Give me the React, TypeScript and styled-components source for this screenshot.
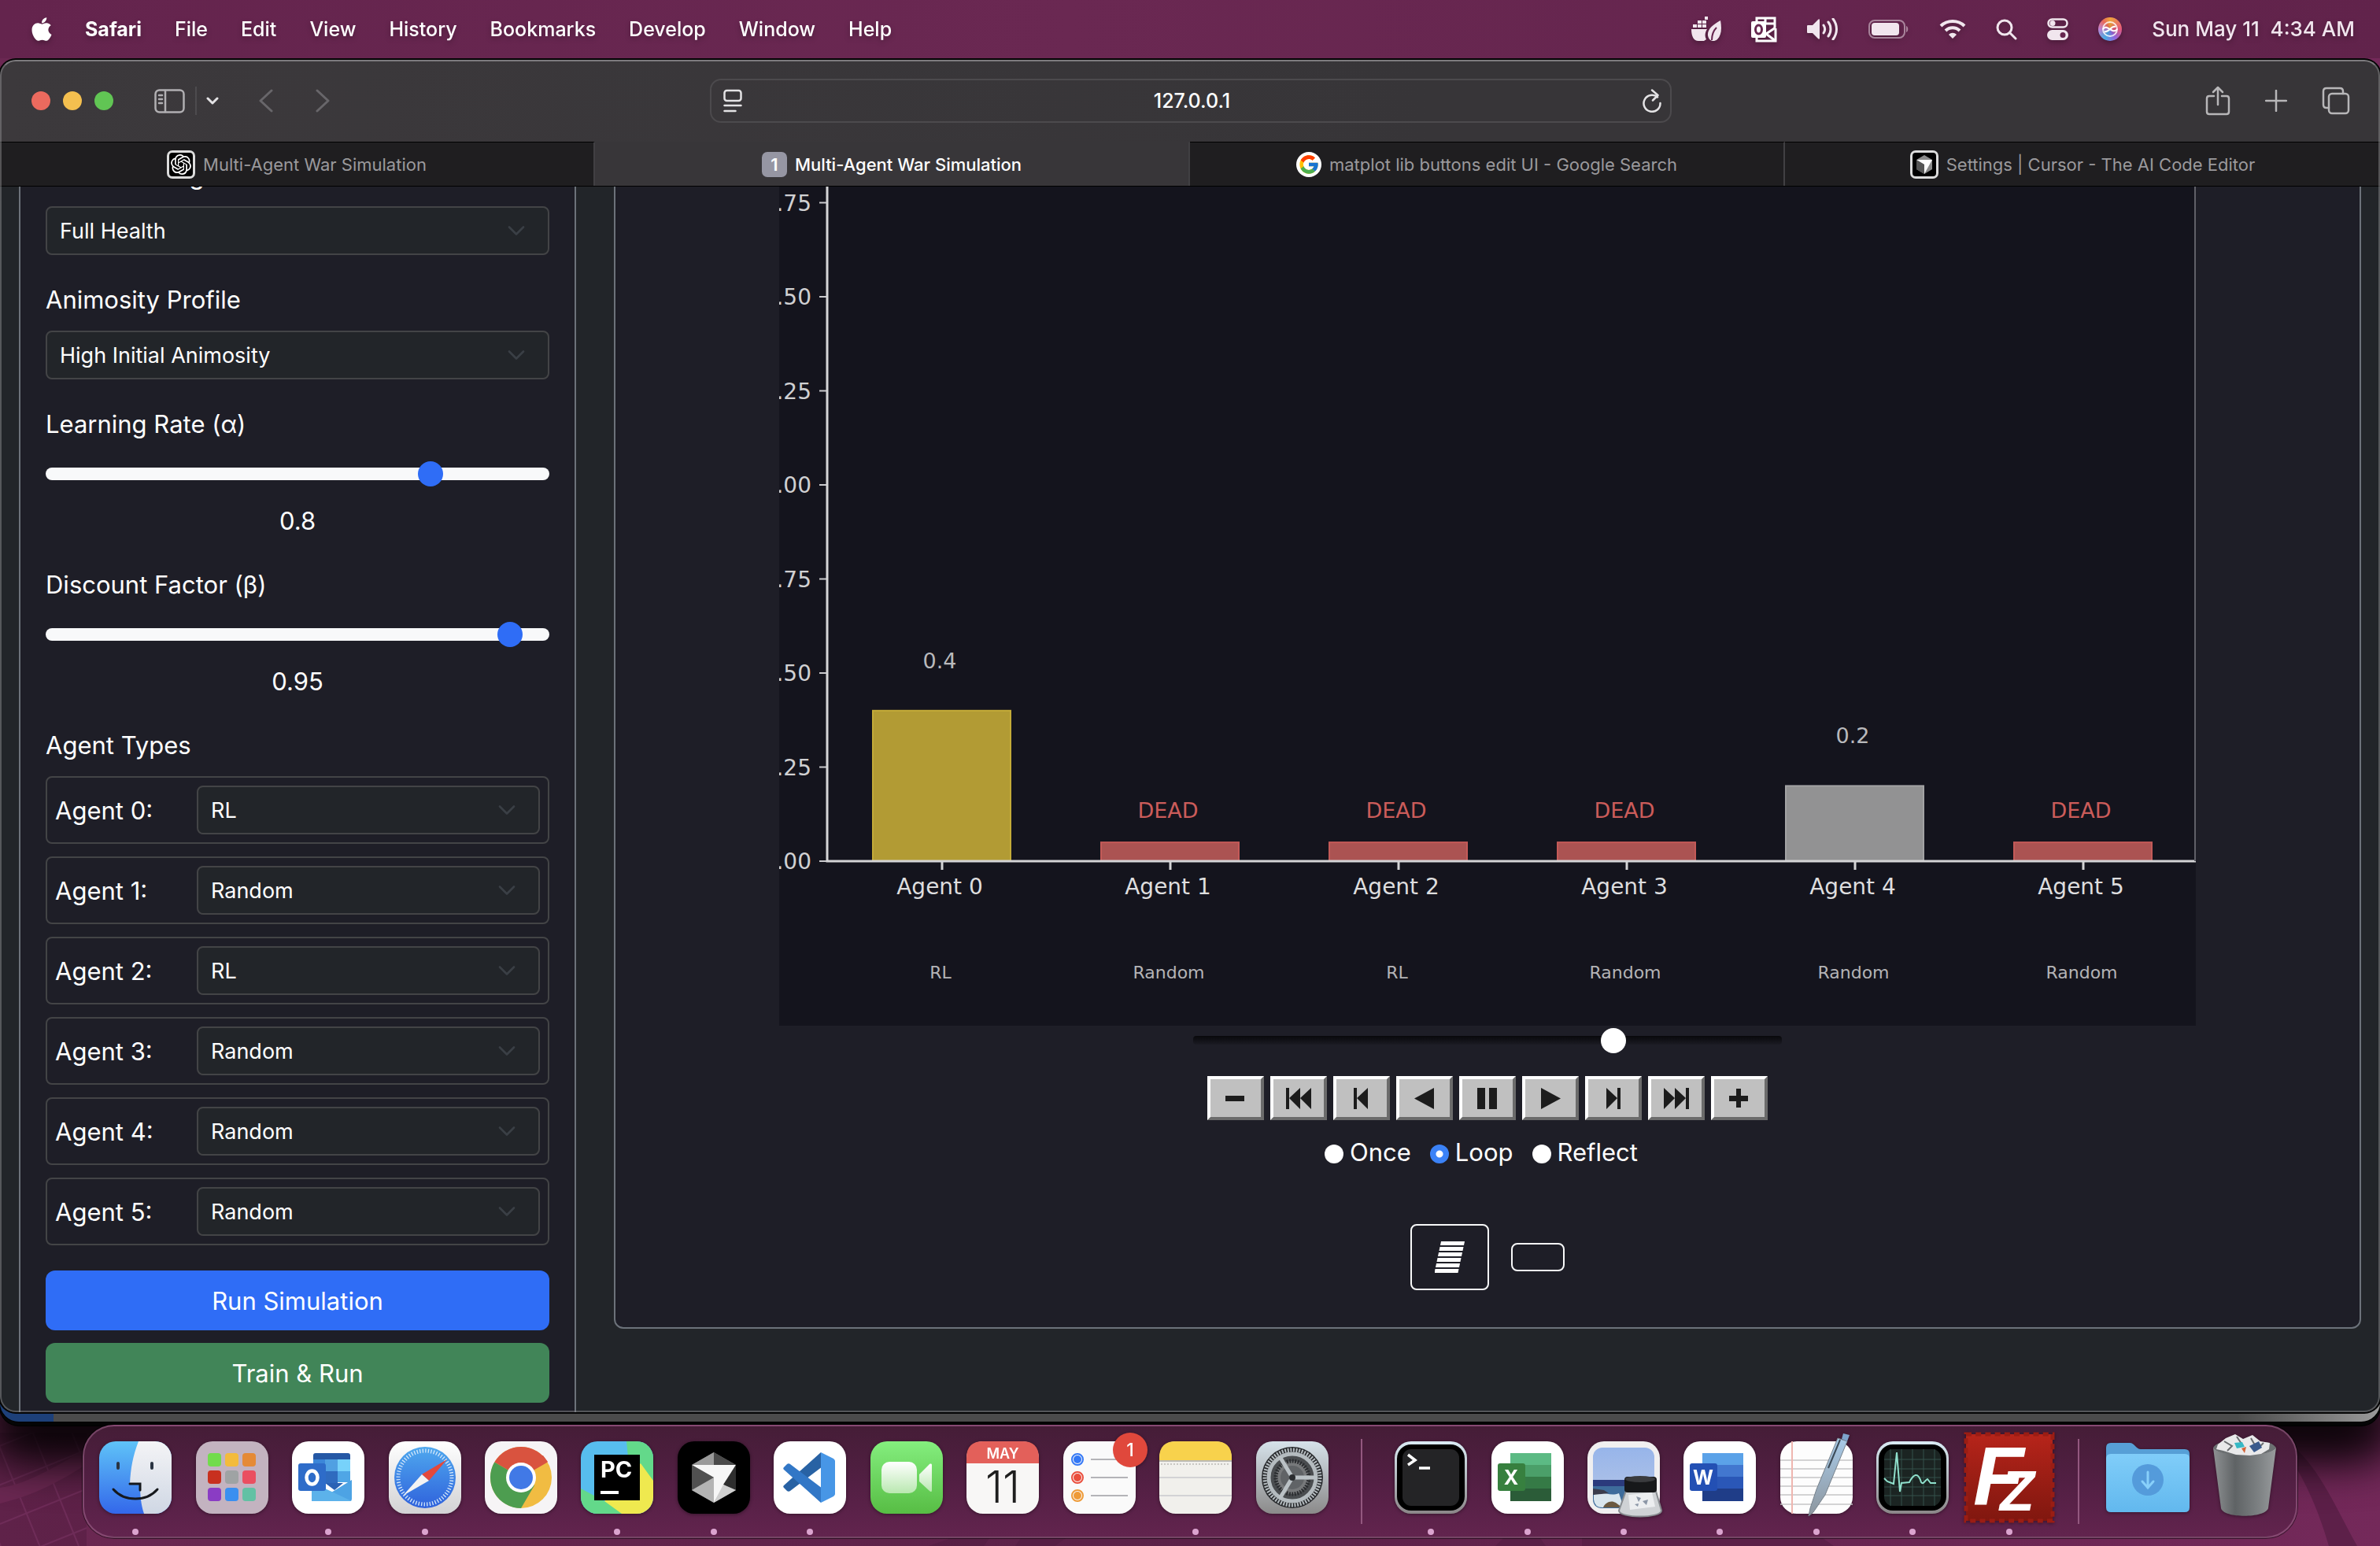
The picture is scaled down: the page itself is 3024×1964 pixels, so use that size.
import React, { useState } from "react";
import styled, { createGlobalStyle, css } from "styled-components";
import { FaApple } from "react-icons/fa";
import { FcGoogle } from "react-icons/fc";
import { SiOpenai } from "react-icons/si";

const ui = `Inter, "Liberation Sans", sans-serif`;
const plot = `"DejaVu Sans", sans-serif`;

const GlobalStyle = createGlobalStyle`
  *, *::before, *::after { box-sizing: border-box; }
  body { margin: 0; background: #5e224b; font-family: ${ui}; color: #fff; overflow: hidden; }
  button, input, select { font-family: inherit; color: inherit; margin: 0; }
  svg { display: block; }
`;

/* ---------- desktop ---------- */

const Desktop = styled.div`
  position: relative;
  isolation: isolate;
  height: 100vh;
  display: flex;
  flex-direction: column;
  overflow: hidden;
  background: linear-gradient(90deg, #6b2852, #5a2047 50%, #74295a);
`;

const Wallpaper = styled.svg`
  position: absolute;
  inset: 0;
  width: 100%;
  height: 100%;
  z-index: -1;
`;

const MenuBar = styled.header`
  flex: 0 0 74px;
  display: flex;
  align-items: center;
  justify-content: space-between;
  padding: 0 32px 0 40px;
  background: linear-gradient(90deg, #64244d, #6a2852 45%, #61234b);
  svg, span, button { filter: drop-shadow(0 3px 3px rgba(0, 0, 0, 0.25)); }
`;

const MenuGroup = styled.nav`
  display: flex;
  align-items: center;
  gap: 42px;
`;

const AppleLogo = styled(FaApple)`
  width: 26px;
  height: 34px;
`;

const MenuItem = styled.button<{ $bold?: boolean }>`
  border: 0;
  padding: 0;
  background: none;
  font-size: 25px;
  line-height: 32px;
  font-weight: ${(p) => (p.$bold ? 700 : 500)};
`;

const StatusGroup = styled.div`
  display: flex;
  align-items: center;
  gap: 38px;
  color: #f1e6ee;
`;

const Clock = styled.span`
  font-size: 26px;
  line-height: 32px;
  font-weight: 500;
  white-space: pre;
`;

const SiriOrb = styled.span`
  display: grid;
  place-items: center;
  width: 30px;
  height: 30px;
  border-radius: 50%;
  background: conic-gradient(#f0a53c, #ea5a7e 90deg, #9a6bea 150deg, #4fb4f0 210deg, #c486d8 270deg, #ea6a5a 320deg, #f0a53c);
`;

/* ---------- browser window ---------- */

const BrowserWindow = styled.main`
  position: relative;
  z-index: 3;
  flex: 1 1 0;
  min-height: 0;
  margin-top: 2px;
  display: flex;
  flex-direction: column;
  overflow: hidden;
  border-radius: 20px;
  background: #222529;
  box-shadow: 0 0 0 2px #050505;
  &::after {
    content: "";
    position: absolute;
    inset: 0;
    border: 2px solid rgba(150, 150, 152, 0.45);
    border-top-color: #7d7b7e;
    border-radius: 20px;
    pointer-events: none;
  }
`;

const BackWindow = styled.div<{ $depth: number; $fill: string }>`
  position: relative;
  z-index: ${(p) => 3 - p.$depth};
  flex: 0 0 60px;
  margin-top: ${(p) => (p.$depth === 1 ? -48 : -55)}px;
  border-radius: 0 0 24px 24px;
  background: ${(p) => p.$fill};
  box-shadow: 0 0 0 1px #000, 0 30px 60px 10px rgba(0, 0, 0, 0.75);
`;

const Toolbar = styled.div`
  flex: 0 0 104px;
  display: grid;
  grid-template-columns: 1fr minmax(0, 1222px) 1fr;
  align-items: center;
  padding: 0 38px 0 40px;
  background: linear-gradient(90deg, #3c393c, #373538 60%);
`;

const ToolSide = styled.div<{ $end?: boolean }>`
  display: flex;
  align-items: center;
  justify-content: ${(p) => (p.$end ? "flex-end" : "flex-start")};
  gap: ${(p) => (p.$end ? 44 : 0)}px;
`;

const Lights = styled.div`
  display: flex;
  gap: 16px;
  margin-right: 52px;
`;

const Light = styled.button<{ $color: string }>`
  width: 24px;
  height: 24px;
  padding: 0;
  border: 0;
  border-radius: 50%;
  background: ${(p) => p.$color};
`;

const ToolButton = styled.button<{ $tone?: string; $after?: number }>`
  display: grid;
  place-items: center;
  padding: 0;
  border: 0;
  background: none;
  color: ${(p) => p.$tone ?? "#b7b6b8"};
  margin-right: ${(p) => p.$after ?? 0}px;
`;

const ToolRule = styled.i`
  width: 2px;
  height: 36px;
  background: #4d4b4e;
  margin-right: 12px;
`;

const Address = styled.label`
  display: flex;
  align-items: center;
  height: 56px;
  padding: 0 10px 0 15px;
  border: 2px solid #4c4a4d;
  border-radius: 14px;
`;

const AddressInput = styled.input`
  flex: 1;
  min-width: 0;
  border: 0;
  background: none;
  text-align: center;
  font-size: 25px;
  font-weight: 500;
  line-height: 32px;
  outline: none;
`;

const TabBar = styled.div`
  flex: 0 0 57px;
  display: grid;
  grid-template-columns: repeat(4, 1fr);
  border-bottom: 1px solid #000;
`;

const Tab = styled.button<{ $active?: boolean }>`
  display: flex;
  align-items: center;
  justify-content: center;
  gap: 10px;
  padding: 0;
  border: 0;
  border-top: 1px solid #000;
  border-right: 2px solid #414043;
  background: #1f1e20;
  color: #9a999c;
  font-size: 22px;
  line-height: 30px;
  ${(p) =>
    p.$active &&
    css`
      border-top-color: #383639;
      background: #383639;
      color: #fff;
      font-weight: 500;
    `}
  &:last-child { border-right: 0; }
`;

const Favicon = styled.span<{ $kind: "dark" | "round" | "pin" }>`
  display: grid;
  place-items: center;
  width: ${(p) => (p.$kind === "dark" ? 36 : 32)}px;
  height: ${(p) => (p.$kind === "dark" ? 36 : 32)}px;
  border-radius: ${(p) => (p.$kind === "round" ? "50%" : "7px")};
  background: ${(p) => (p.$kind === "dark" ? "#000" : p.$kind === "round" ? "#fff" : "#9696a3")};
  border: ${(p) => (p.$kind === "dark" ? "3px solid #dcdcdc" : "0")};
  color: #fff;
  font-size: 22px;
  font-weight: 600;
`;

/* ---------- page ---------- */

const Viewport = styled.div`
  flex: 1;
  min-height: 0;
  overflow: hidden;
`;

/* The page is shown scrolled down, so its first rows lie above the viewport. */
const Page = styled.div`
  margin-top: -97px;
  display: grid;
  grid-template-columns: 1fr 3fr;
  align-items: start;
`;

const Column = styled.div`
  min-width: 0;
  padding: 24px;
`;

const Card = styled.section`
  border: 2px solid #6c727a;
  border-radius: 12px;
  background: #1e1e27;
`;

const Sidebar = styled(Card)`
  display: flex;
  flex-direction: column;
  gap: 32px;
  padding: 32px;
`;

const Field = styled.div`
  display: flex;
  flex-direction: column;
`;

const FieldLabel = styled.label`
  padding-top: 1px;
  margin-bottom: 15px;
  font-size: 31px;
  line-height: 48px;
`;

const RangeValue = styled.output`
  padding-top: 12px;
  text-align: center;
  font-size: 31px;
  line-height: 48px;
`;

const SelectBox = styled.div`
  flex: 1;
  min-width: 0;
  display: grid;
  align-items: center;
  & > * { grid-area: 1 / 1; }
  svg { justify-self: end; margin-right: 30px; pointer-events: none; }
`;

const SelectInput = styled.select`
  appearance: none;
  width: 100%;
  height: 62px;
  padding: 2px 16px 0;
  border: 2px solid #434446;
  border-radius: 8px;
  background: #222529;
  font-size: 27px;
  line-height: 42px;
`;

const RateRange = styled.input`
  appearance: none;
  width: 100%;
  height: 48px;
  background: none;
  &::-webkit-slider-runnable-track {
    height: 16px;
    border-radius: 8px;
    background: #f8f9fa;
  }
  &::-webkit-slider-thumb {
    appearance: none;
    width: 32px;
    height: 32px;
    margin-top: -8px;
    border-radius: 50%;
    background: #2f6df6;
  }
`;

const AgentList = styled.div`
  display: flex;
  flex-direction: column;
  gap: 16px;
`;

const AgentRow = styled.div`
  display: flex;
  align-items: center;
  padding: 10px;
  border: 2px solid #434446;
  border-radius: 8px;
`;

const AgentName = styled.label`
  flex: 0 0 180px;
  padding-top: 2px;
  font-size: 31px;
  line-height: 48px;
`;

const Actions = styled.div`
  display: flex;
  flex-direction: column;
  gap: 16px;
`;

const ActionButton = styled.button<{ $color: string }>`
  height: 76px;
  padding: 1px 0 0;
  border: 0;
  border-radius: 12px;
  background: ${(p) => p.$color};
  font-size: 31px;
  line-height: 48px;
`;

const Stage = styled(Card)`
  display: flex;
  flex-direction: column;
  align-items: center;
  padding: 24px 24px 47px;
`;

const Chart = styled.svg`
  width: 100%;
  max-width: 1800px;
  height: auto;
  background: #14141d;
  font-family: ${plot};
`;

const FrameRange = styled.input`
  appearance: none;
  width: 748px;
  max-width: 100%;
  height: 32px;
  margin: 2px 0 30px;
  background: none;
  &::-webkit-slider-runnable-track {
    height: 11px;
    border-radius: 4px;
    background: linear-gradient(#08080b, #1b1b23);
  }
  &::-webkit-slider-thumb {
    appearance: none;
    width: 32px;
    height: 32px;
    margin-top: -10px;
    border-radius: 50%;
    background: #fff;
  }
`;

const PlayerButtons = styled.div`
  display: flex;
  gap: 8px;
`;

const PlayerButton = styled.button`
  display: grid;
  place-items: center;
  width: 72px;
  height: 56px;
  padding: 0;
  border: 4px solid;
  border-color: #fff #6b6b6b #6b6b6b #fff;
  background: #c0c0c0;
  color: #1c1c1c;
`;

const LoopModes = styled.div`
  display: flex;
  gap: 24px;
  margin: 17px 0 67px;
  padding-right: 16px;
`;

const LoopMode = styled.label`
  display: flex;
  align-items: center;
  gap: 8px;
  font-size: 31px;
  line-height: 48px;
`;

const Radio = styled.input`
  appearance: none;
  width: 24px;
  height: 24px;
  margin-top: 4px;
  border-radius: 50%;
  background: radial-gradient(#fff 60%, #e2e2e2);
  &:checked { background: radial-gradient(#fff 0 4px, #3b82f7 5px); }
`;

const Toggles = styled.div`
  display: flex;
  align-items: center;
  gap: 28px;
`;

const Toggle = styled.button<{ $small?: boolean }>`
  display: grid;
  place-items: center;
  width: ${(p) => (p.$small ? 68 : 100)}px;
  height: ${(p) => (p.$small ? 36 : 84)}px;
  padding: 0;
  border: 2px solid #f8f9fa;
  border-radius: 8px;
  background: none;
`;

/* ---------- dock ---------- */

const Dock = styled.footer`
  position: relative;
  z-index: 4;
  flex: 0 0 144px;
  margin: -1px 105px 10px;
  display: flex;
  padding: 0 4px;
  border: 2px solid rgba(190, 130, 170, 0.4);
  border-radius: 40px;
  background: linear-gradient(#451d37, #521f43 50%, #62244e);
  box-shadow: 0 0 0 1px rgba(0, 0, 0, 0.5);
`;

const DockCell = styled.button`
  flex: 1 1 0;
  min-width: 0;
  display: flex;
  flex-direction: column;
  align-items: center;
  padding: 19px 0 0;
  border: 0;
  background: none;
`;

const DockIcon = styled.svg`
  width: 92px;
  height: 92px;
  overflow: visible;
  filter: drop-shadow(0 1px 2px rgba(0, 0, 0, 0.4));
`;

const RunningDot = styled.i`
  width: 8px;
  height: 8px;
  margin-top: 19px;
  border-radius: 50%;
  background: #dba4cf;
`;

const DockRule = styled.i`
  flex: 0 0 54px;
  display: grid;
  place-items: center;
  &::after { content: ""; width: 2px; height: 108px; background: #93587f; }
`;

/* ---------- small drawings ---------- */

const Chevron = () => (
  <svg width="24" height="24" viewBox="0 0 16 16" fill="none" stroke="#3a3f45" strokeWidth="1.8" strokeLinecap="round" strokeLinejoin="round">
    <path d="m2 5 6 6 6-6" />
  </svg>
);

const line = { fill: "none", stroke: "currentColor", strokeLinecap: "round", strokeLinejoin: "round" } as const;

const DockerIcon = () => (
  <svg width="38" height="32" viewBox="0 0 38 32" fill="currentColor">
    <path d="M0 16h20c-3 5-3 9-1 13l-3 2H9C3 31 0 25 0 16z" />
    <path d="M2 10h5v4H2zM8 10h5v4H8zM14 10h5v4h-5zM8 5h5v4H8zM14 5h5v4h-5zM17 0h4v4h-4z" />
    <path d="M37 5c2 11 1 19-4 24-5 4-11 2-12-5-1-8 7-14 16-19z" />
    <path d="M26 30c0-8 2-12 6-16" fill="none" stroke="#66264f" strokeWidth="2" />
  </svg>
);

const OutlookIcon = () => (
  <svg width="33" height="33" viewBox="0 0 33 33" fill="none" stroke="#fff" strokeWidth="3">
    <path d="M7 6V2h23v12M7 26v5h24V15M18 2v8M18 9h12" />
    <path d="m19 22 12-8M19 22l12 9" />
    <rect x="0" y="6" width="19" height="21" rx="2" fill="#fff" stroke="none" />
    <ellipse cx="9.500" cy="16.500" rx="4" ry="5.500" stroke="#66264f" />
  </svg>
);

const VolumeIcon = () => (
  <svg width="40" height="28" viewBox="0 0 40 28">
    <path d="M1 9h6l7-7c1-1 2-1 2 1v22c0 2-1 2-2 1l-7-7H1c-1 0-1-1-1-1v-8s0-1 1-1z" fill="currentColor" />
    <path d="M21 9c2 3 2 7 0 10M27 5c4 5 4 13 0 18M33 1c6 8 6 18 0 26" {...line} strokeWidth="3" />
  </svg>
);

const BatteryIcon = () => (
  <svg width="52" height="24" viewBox="0 0 52 24">
    <rect x="1" y="1" width="45" height="22" rx="7" fill="none" stroke="currentColor" strokeOpacity="0.5" strokeWidth="2" />
    <rect x="4" y="4" width="35" height="16" rx="4" fill="currentColor" />
    <path d="M48 8c3 1 3 7 0 8z" fill="currentColor" fillOpacity="0.5" />
  </svg>
);

const WifiIcon = () => (
  <svg width="34" height="26" viewBox="0 0 34 26">
    <path d="M2 9C10 1 24 1 32 9M8 15c5-5 13-5 18 0" {...line} strokeWidth="4" strokeLinecap="butt" />
    <path d="M17 25l-5-5c3-3 7-3 10 0z" fill="currentColor" />
  </svg>
);

const SearchIcon = () => (
  <svg width="27" height="27" viewBox="0 0 27 27" {...line} strokeWidth="3">
    <circle cx="11" cy="11" r="9" />
    <path d="m18 18 7 7" />
  </svg>
);

const ControlIcon = () => (
  <svg width="27" height="28" viewBox="0 0 27 28">
    <rect x="1.500" y="1.500" width="24" height="10" rx="5" {...line} strokeWidth="2.500" />
    <circle cx="7" cy="6.500" r="3.500" fill="currentColor" />
    <rect x="0" y="15" width="27" height="13" rx="6.500" fill="currentColor" />
    <circle cx="20" cy="21.500" r="3.500" fill="#66264f" />
  </svg>
);

const SidebarIcon = () => (
  <svg width="39" height="31" viewBox="0 0 39 31" {...line} strokeWidth="2.500">
    <rect x="1.500" y="1.500" width="36" height="28" rx="5" />
    <path d="M14 2v27M6 8h4M6 13h4M6 18h4" />
  </svg>
);

const CursorMark = () => (
  <svg width="22" height="24" viewBox="0 0 22 24">
    <path d="M11 0 21 6v12l-10 6L1 18V6z" fill="#8a8a8a" />
    <path d="M1 6h20L11 24V12z" fill="#fff" />
    <path d="M1 6l10 6v12L1 18z" fill="#555" />
  </svg>
);

/* ---------- player ---------- */

const players: { label: string; d: string }[] = [
  { label: "Slower", d: "M2 12h24v7H2z" },
  { label: "First frame", d: "M-1 2h4v27h-4zM3 15 17 2v27zM17 15 31 2v27z" },
  { label: "Previous frame", d: "M5 2h4v27H5zM9 15 23 2v27z" },
  { label: "Play backward", d: "M2 15.500 27 2v27z" },
  { label: "Pause", d: "M2 2h10v27H2zM17 2h10v27H17z" },
  { label: "Play", d: "M3 2v27l25-13.500z" },
  { label: "Next frame", d: "M6 2v27l14-14zM20 2h4v27h-4z" },
  { label: "Last frame", d: "M-1 2v27l14-14zM13 2v27l14-14zM27 2h4v27h-4z" },
  { label: "Faster", d: "M2 12h9V3h6v9h9v7h-9v8h-6v-8H2z" },
];

/* ---------- plot ---------- */

const baseline = 904;
const unit = 478;
const agents = [
  { name: "Agent 0", type: "RL", value: 0.4, note: "0.4", fill: "#b29b34", edge: "#c4ab38" },
  { name: "Agent 1", type: "Random", value: 0.05, note: "DEAD", fill: "#ab5352", edge: "#c45a58" },
  { name: "Agent 2", type: "RL", value: 0.05, note: "DEAD", fill: "#ab5352", edge: "#c45a58" },
  { name: "Agent 3", type: "Random", value: 0.05, note: "DEAD", fill: "#ab5352", edge: "#c45a58" },
  { name: "Agent 4", type: "Random", value: 0.2, note: "0.2", fill: "#929293", edge: "#a3a3a4" },
  { name: "Agent 5", type: "Random", value: 0.05, note: "DEAD", fill: "#ab5352", edge: "#c45a58" },
];

const HealthPlot = () => (
  <Chart viewBox="0 0 1800 1113" role="img" aria-label="Agent health">
    {agents.map((a, i) => {
      const x = 206 + i * 290;
      const h = a.value * unit;
      const dead = a.note === "DEAD";
      return (
        <g key={a.name} textAnchor="middle">
          <rect x={x - 87} y={baseline - h} width="175" height={h} fill={a.fill} stroke={a.edge} strokeWidth="2" />
          <text x={x - 2} y={baseline - h - (dead ? 31 : 54)} fontSize="27" fill={dead ? "#cb5c5a" : "#b9b9bc"}>{a.note}</text>
          <path d={`M${x + 1} ${baseline}v11`} stroke="#d4d4d6" strokeWidth="3" />
          <text x={x - 2} y="946" fontSize="28" fill="#dededf">{a.name}</text>
          <text x={x - 1} y="1053" fontSize="22" fill="#b3b3b6">{a.type}</text>
        </g>
      );
    })}
    {[0, 1, 2, 3, 4, 5, 6, 7].map((n) => {
      const y = baseline - n * 0.25 * unit;
      return (
        <g key={n}>
          <path d={`M51 ${y}h11`} stroke="#c9c9cc" strokeWidth="2" />
          <text x="41" y={y + 10} textAnchor="end" fontSize="28" fill="#d0d0d2">{(n * 0.25).toFixed(2)}</text>
        </g>
      );
    })}
    <path d={`M61 0V${baseline}H1800`} fill="none" stroke="#d4d4d6" strokeWidth="3" />
    <path d={`M1799 0V${baseline}`} stroke="#606068" strokeWidth="2" />
  </Chart>
);

/* ---------- dock icons ---------- */

const Tile = ({ fill = "#fff" }: { fill?: string }) => <rect width="92" height="92" rx="21" fill={fill} />;

const Gradient = ({ id, from, to }: { id: string; from: string; to: string }) => (
  <linearGradient id={id} x1="0" y1="0" x2="0" y2="1">
    <stop offset="0" stopColor={from} />
    <stop offset="1" stopColor={to} />
  </linearGradient>
);

const Letter = ({ x, y, size, fill = "#fff", weight = 700, children }: { x: number; y: number; size: number; fill?: string; weight?: number; children: string }) => (
  <text x={x} y={y} fontSize={size} fill={fill} fontWeight={weight} textAnchor="middle" fontFamily={ui}>{children}</text>
);

const finder = (
  <>
    <Gradient id="fi" from="#5fc3f8" to="#3367ea" />
    <Gradient id="fw" from="#f4f4f6" to="#cfd7e4" />
    <clipPath id="ft"><rect width="92" height="92" rx="21" /></clipPath>
    <g clipPath="url(#ft)">
      <rect width="92" height="92" fill="url(#fi)" />
      <path d="M50 0c-7 18-10 34-11 54h13c0 14 1 26 5 38h40V0z" fill="url(#fw)" />
    </g>
    <path d="M24 28v6M67 28v6" stroke="#2a3442" strokeWidth="4" strokeLinecap="round" />
    <path d="M39 54h13v8M18 61c14 16 42 16 56 0" fill="none" stroke="#15181c" strokeWidth="3" strokeLinecap="round" />
  </>
);

const padColors = ["#72dc4c", "#f3bb3c", "#e58a36", "#c8301f", "#9fa3a4", "#ea4f60", "#8a3cc4", "#3a8ff0", "#62c1a4"];
const launchpad = (
  <>
    <Tile fill="#c3b3c0" />
    {padColors.map((c, i) => (
      <rect key={c} x={15 + (i % 3) * 22} y={15 + Math.floor(i / 3) * 22} width="17" height="17" rx="4" fill={c} />
    ))}
  </>
);

const outlook = (
  <>
    <Tile />
    <path d="M27 18q0-3 3-3h41q3 0 3 3v30H27z" fill="#2558a5" />
    <path d="M27 23h15v15H27z" fill="#3b86d8" />
    <path d="M42 23h16v15H42z" fill="#50a0e2" />
    <path d="M58 23h16v15H58z" fill="#77d2fa" />
    <path d="M27 38h31v16H27z" fill="#2f6bbf" />
    <path d="M58 38h16v14H58z" fill="#4fa6e6" />
    <path d="M25 50l25 15 26-16v24q0 3-3 3H28q-3 0-3-3z" fill="#4da3e4" />
    <path d="M42 53h23L54 62z" fill="#2a62b4" />
    <path d="M25 76V52l51 24z" fill="#5cb2ea" />
    <rect x="8" y="28" width="35" height="35" rx="3" fill="#2e6cc9" />
    <ellipse cx="25.500" cy="46" rx="7" ry="8.500" fill="none" stroke="#fff" strokeWidth="4.500" />
  </>
);

const safari = (
  <>
    <Gradient id="st" from="#ffffff" to="#d2d2d4" />
    <Gradient id="sb" from="#4fa8ee" to="#2f62dc" />
    <Tile fill="url(#st)" />
    <circle cx="46" cy="46" r="39" fill="url(#sb)" />
    <circle cx="46" cy="46" r="34" fill="none" stroke="#d5e8fa" strokeWidth="5" strokeDasharray="1.300 2.260" />
    <path d="M74 23 51 50l-9-8z" fill="#e3483b" />
    <path d="M18 69 42 42l9 8z" fill="#f3f3f3" />
  </>
);

const chrome = (
  <>
    <Tile fill="#f6f4f6" />
    <circle cx="46" cy="46" r="39" fill="#f1bc42" />
    <path d="M46 46 12.200 26.500A39 39 0 0 1 79.800 26.500z" fill="#d9533f" />
    <path d="M12.200 26.500A39 39 0 0 0 46 85l17-29-17-10z" fill="#4d9d50" />
    <path d="M46 26h34l-6-8H30z" fill="#d9533f" />
    <circle cx="46" cy="46" r="19" fill="#fff" />
    <circle cx="46" cy="46" r="15" fill="#4179e6" />
  </>
);

const pycharm = (
  <>
    <clipPath id="pt"><rect width="92" height="92" rx="21" /></clipPath>
    <g clipPath="url(#pt)">
      <rect width="92" height="92" fill="#57bdee" />
      <path d="M58 0h34v60L60 20z" fill="#63d98a" />
      <path d="M0 60l60 32H0z" fill="#63d98a" />
      <path d="M76 28 92 50v42H52L30 76z" fill="#efe94f" />
    </g>
    <rect x="17" y="17" width="58" height="58" fill="#000" />
    <Letter x={45} y={46} size={29}>PC</Letter>
    <path d="M25 65h23" stroke="#fff" strokeWidth="4" />
  </>
);

const cursor = (
  <>
    <Tile fill="#000" />
    <path d="M46 14 74 30v32L46 78 18 62V30z" fill="#777" />
    <path d="M46 14 74 30H18z" fill="#4a4a4a" />
    <path d="M46 14v16H18z" fill="#9a9a9a" />
    <path d="M18 30h56L46 78V46z" fill="#f6f6f6" />
    <path d="M18 30l28 16-28 16z" fill="#505050" />
    <path d="M18 62l28-16v32z" fill="#b4b4b4" />
    <path d="M74 30v32L58 55z" fill="#2e2e2e" />
    <path d="M58 55l16 7-28 16z" fill="#d0d0d0" />
  </>
);

const vscode = (
  <>
    <Tile />
    <path d="M60 14 13 56c-1 1-1 2 0 3l4 4c1 1 3 1 4 0L62 32z" fill="#2862a4" />
    <path d="M60 78 13 36c-1-1-1-2 0-3l4-4c1-1 3-1 4 0L62 60z" fill="#3277c6" />
    <path d="M60 14l16 8c1 1 2 2 2 3v42c0 1-1 2-2 3l-16 8z" fill="#4796e6" />
  </>
);

const facetime = (
  <>
    <Gradient id="fg" from="#84ee7e" to="#57bd44" />
    <Gradient id="fc" from="#ffffff" to="#b9e8b0" />
    <Tile fill="url(#fg)" />
    <rect x="14" y="26" width="45" height="40" rx="10" fill="url(#fc)" />
    <path d="M62 42 75 29c2-1 3 0 3 1v32c0 2-1 3-3 1L62 51z" fill="url(#fc)" />
  </>
);

const calendar = (
  <>
    <Tile fill="#f8f7f6" />
    <path d="M0 28V21Q0 0 21 0h50q21 0 21 21v7z" fill="#e3605a" />
    <Letter x={46} y={22} size={18} weight={600}>MAY</Letter>
    <Letter x={46} y={78} size={56} weight={300} fill="#1e1e1e">11</Letter>
  </>
);

const reminders = (
  <>
    <Tile fill="#fafafa" />
    {["#3478f6", "#ea4e3d", "#ee9a37"].map((c, i) => (
      <g key={c}>
        <circle cx="18" cy={23 + i * 23} r="7" fill="none" stroke={c} strokeWidth="2" />
        <circle cx="18" cy={23 + i * 23} r="5" fill={c} />
        <path d={`M35 ${23 + i * 23}h47`} stroke="#b4b4b8" strokeWidth="2" />
      </g>
    ))}
    <circle cx="85" cy="11" r="22" fill="#e0483c" />
    <Letter x={85} y={19} size={23} weight={500}>1</Letter>
  </>
);

const notes = (
  <>
    <Tile fill="#f1f0ec" />
    <path d="M0 24v-3Q0 0 21 0h50q21 0 21 21v3z" fill="#f8d24c" />
    <path d="M0 25h92" stroke="#bcbab4" strokeWidth="2" />
    <path d="M2 29h88" stroke="#c9c7c2" strokeWidth="2" strokeDasharray="2 2" />
    <path d="M0 46h92M0 69h92" stroke="#d3d3d5" strokeWidth="2" />
  </>
);

const settings = (
  <>
    <Gradient id="sg" from="#d6e2ea" to="#8b8a8a" />
    <Tile fill="url(#sg)" />
    <circle cx="46" cy="46" r="39" fill="#26282b" />
    <circle cx="46" cy="46" r="35" fill="none" stroke="#b4bbbf" strokeWidth="5" strokeDasharray="2 1.600" />
    <circle cx="46" cy="46" r="30" fill="#4a4d50" stroke="#b4bbbf" strokeWidth="5" />
    <circle cx="46" cy="46" r="21" fill="#77797b" stroke="#2b2d30" strokeWidth="5" strokeDasharray="2 1.500" />
    <circle cx="46" cy="46" r="15" fill="#606366" />
    <path d="M46 46h29M46 46 31 21M46 46 31 71" stroke="#bac1c5" strokeWidth="5" strokeLinecap="round" />
    <circle cx="46" cy="46" r="4" fill="#2b2d30" />
  </>
);

const terminal = (
  <>
    <Gradient id="tg" from="#d9ebf4" to="#8b8688" />
    <Tile fill="url(#tg)" />
    <rect x="3" y="4" width="86" height="84" rx="18" fill="#000" />
    <rect x="10" y="10" width="72" height="72" rx="11" fill="#242426" />
    <path d="m17 17 9 7-9 6" fill="none" stroke="#fff" strokeWidth="3.500" />
    <path d="M31 34h14" stroke="#fff" strokeWidth="3.500" />
  </>
);

const office = (rows: string[], badge: string, letter: string) => (
  <>
    <Tile />
    {rows.map((c, i) => (
      <rect key={c} x="24" y={15 + i * 15} width="52" height="16" fill={c} />
    ))}
    <rect x="8" y="28" width="35" height="35" rx="3" fill={badge} />
    <Letter x={25} y={55} size={25}>{letter}</Letter>
  </>
);

const preview = (
  <>
    <Gradient id="pv" from="#97b5ea" to="#b7c6e6" />
    <Tile fill="#f0eff0" />
    <rect x="7" y="8" width="78" height="77" rx="12" fill="url(#pv)" />
    <path d="M7 49h78v24q0 12-12 12H19Q7 85 7 73z" fill="#3e6c9b" />
    <path d="M7 49h78v8H7z" fill="#2b3a7c" />
    <path d="M8 68c12-6 20 3 32-2l6 18H19Q9 84 8 74z" fill="#d9e6ee" />
    <path d="M20 84c2-6 10-10 16-6l8 6z" fill="#6b5a41" />
    <path d="M7 60l14 2 6 4-20 2z" fill="#3a3c4c" />
    <path d="M50 60h36l8 28c0 10-54 10-54 0z" fill="#cfd2d5" stroke="#888c90" strokeWidth="2" />
    <path d="M52 68l30-3 4 18-32 4z" fill="#eceef0" />
    <path d="M62 70l6 2-3 5zM70 76l7-2-2 7zM60 80l5-1-1 4z" fill="#8b96a6" />
    <rect x="47" y="45" width="41" height="20" rx="4" fill="#17181a" />
    <ellipse cx="67" cy="48" rx="19" ry="4" fill="#3a3b3e" />
  </>
);

const textedit = (
  <>
    <Gradient id="tp" from="#a8cae8" to="#8d969e" />
    <Tile fill="#fdfdfd" />
    {[24, 35, 46, 57, 68, 80].map((y) => (
      <path key={y} d={`M0 ${y}h92`} stroke="#c4c4c6" strokeWidth="1.500" />
    ))}
    <path d="M15 0v92" stroke="#efb6b0" strokeWidth="2" />
    <path d="M73 -4l12 4L57 68 42 90l-6 5 2-10 8-24z" fill="url(#tp)" stroke="#77828c" strokeWidth="1" />
    <path d="M80 -10l8 2-3 8-7-3z" fill="#7ea3cc" />
    <path d="M76 -2 61 34" stroke="#3c4a57" strokeWidth="2" />
  </>
);

const activity = (
  <>
    <Tile fill="url(#tg)" />
    <rect x="3" y="4" width="86" height="84" rx="18" fill="#000" />
    <rect x="10" y="10" width="72" height="72" rx="11" fill="#1b2422" />
    <path d="M10 23h72M10 35h72M10 46h72M10 58h72M10 69h72M18 10v72M32 10v72M46 10v72M60 10v72M74 10v72" stroke="#35504a" strokeWidth="1" />
    <path d="M10 47l4 4 8 3 4-40 4 50 2-11 10-1c5-10 11-14 15 0 3 4 6-4 8-4l4 5h7" fill="none" stroke="#8fe0cc" strokeWidth="2" />
  </>
);

const filezilla = (
  <>
    <Gradient id="fz" from="#b6241a" to="#80170f" />
    <rect x="-9" y="-9" width="110" height="110" fill="url(#fz)" />
    <rect x="-9" y="-9" width="110" height="110" fill="none" stroke="#9a1d14" strokeWidth="5" strokeDasharray="7 5.222" />
    <g fontFamily={`"Liberation Sans", sans-serif`} fontWeight="700" fontStyle="italic" fill="#fff">
      <text x="0" y="81" fontSize="106">F</text>
      <text x="34" y="88" fontSize="72">Z</text>
    </g>
  </>
);

const downloads = (
  <>
    <Gradient id="dl" from="#80cdf9" to="#62b8ee" />
    <path d="M-7 8q0-6 6-6h24c6 0 8 8 14 8h56q6 0 6 6v30H-7z" fill="#579fd6" />
    <path d="M-7 22q0-6 6-6h94q6 0 6 6v62q0 6-6 6H-1q-6 0-6-6z" fill="url(#dl)" />
    <circle cx="46" cy="49" r="20" fill="#549bdb" />
    <path d="M46 39v19m-7-7 7 8 7-8" fill="none" stroke="#88d0fa" strokeWidth="3" strokeLinecap="round" />
  </>
);

const trash = (
  <>
    <linearGradient id="tr">
      <stop offset="0" stopColor="#8e9193" />
      <stop offset="0.35" stopColor="#5f6365" />
      <stop offset="0.7" stopColor="#7b7f81" />
      <stop offset="1" stopColor="#989b9d" />
    </linearGradient>
    <path d="M6 8 16 85c3 13 56 13 60 0L86 8c-10 12-70 12-80 0z" fill="url(#tr)" />
    <path d="M6 8c4-6 12-8 22-7h36c12-1 18 2 22 7-10 13-70 13-80 0z" fill="#6c7072" />
    <path d="M12 4 22-4 34-9l10 6 12-5 10 8 12 2-1 8-10 6-14 2-18-1-16-5-9-2z" fill="#e9e9ea" />
    <path d="m20 0 10 6-6 6m12-18 8 12m10-10 8 14 8-8" fill="none" stroke="#6a6d70" strokeWidth="2" />
    <path d="m33 2 10-1 3 6-10 2z" fill="#36b8c4" />
    <path d="m52 6 12-6 4 8-10 6z" fill="#3a5a8c" />
    <path d="m42 9 6-2-2 8z" fill="#d3653a" />
  </>
);

type DockApp = { name: string; art: React.ReactNode; running?: boolean };

const mainApps: DockApp[] = [
  { name: "Finder", art: finder, running: true },
  { name: "Launchpad", art: launchpad },
  { name: "Outlook", art: outlook, running: true },
  { name: "Safari", art: safari, running: true },
  { name: "Chrome", art: chrome },
  { name: "PyCharm", art: pycharm, running: true },
  { name: "Cursor", art: cursor, running: true },
  { name: "Code", art: vscode, running: true },
  { name: "FaceTime", art: facetime },
  { name: "Calendar", art: calendar },
  { name: "Reminders", art: reminders },
  { name: "Notes", art: notes, running: true },
  { name: "Settings", art: settings },
];

const recentApps: DockApp[] = [
  { name: "Terminal", art: terminal, running: true },
  { name: "Excel", art: office(["#5cba84", "#4b9f69", "#357a46", "#2b5c38"], "#37803f", "X"), running: true },
  { name: "Preview", art: preview, running: true },
  { name: "Word", art: office(["#5ba2e8", "#4277cf", "#2a57b7", "#1f3d88"], "#2350b4", "W"), running: true },
  { name: "TextEdit", art: textedit, running: true },
  { name: "Activity Monitor", art: activity, running: true },
  { name: "FileZilla", art: filezilla, running: true },
];

const places: DockApp[] = [
  { name: "Downloads", art: downloads },
  { name: "Trash", art: trash },
];

const DockApps = ({ apps }: { apps: DockApp[] }) => (
  <>
    {apps.map((a) => (
      <DockCell key={a.name} aria-label={a.name}>
        <DockIcon viewBox="0 0 92 92" aria-hidden="true">{a.art}</DockIcon>
        {a.running && <RunningDot />}
      </DockCell>
    ))}
  </>
);

/* ---------- form parts ---------- */

const Select = ({ id, value, options }: { id: string; value: string; options: string[] }) => (
  <SelectBox>
    <SelectInput id={id} defaultValue={value}>
      {options.map((o) => (
        <option key={o}>{o}</option>
      ))}
    </SelectInput>
    <Chevron />
  </SelectBox>
);

const RateField = ({ id, label, start }: { id: string; label: string; start: number }) => {
  const [value, setValue] = useState(start);
  return (
    <Field>
      <FieldLabel htmlFor={id}>{label}</FieldLabel>
      <RateRange id={id} type="range" min="0.1" max="1" step="0.01" value={value} onChange={(e) => setValue(Number(e.target.value))} />
      <RangeValue htmlFor={id}>{value}</RangeValue>
    </Field>
  );
};

export default function App() {
  const [mode, setMode] = useState("Loop");
  return (
    <>
      <GlobalStyle />
      <Desktop>
        <Wallpaper aria-hidden="true">
          <defs>
            <pattern id="tiles" width="46" height="46" patternUnits="userSpaceOnUse" patternTransform="rotate(-22)">
              <rect width="46" height="46" fill="#4f1b3f" fillOpacity="0.45" />
              <path d="M0 0h46M0 0v46" stroke="#7a3263" strokeWidth="4" strokeOpacity="0.6" />
            </pattern>
          </defs>
          <path d="M0 1820h110v144H0z" fill="url(#tiles)" />
          <path d="M0 1890c30-4 60-20 110-50v20c-40 26-70 40-110 50z" fill="#6b2852" />
          <path d="M1180 1964l40-14h40l-10 14zM1290 1964l10-14h60l-20 14zM1900 1964l14-14h40l10 14zM2010 1964v-14h300l20 14z" fill="#4f1b3f" fillOpacity="0.5" />
          <path d="M2905 1830c40 30 60 80 90 134h-36c-14-50-34-90-54-120z" fill="#5d2049" />
        </Wallpaper>

        <MenuBar>
          <MenuGroup aria-label="Menu bar">
            <AppleLogo />
            {["Safari", "File", "Edit", "View", "History", "Bookmarks", "Develop", "Window", "Help"].map((m) => (
              <MenuItem key={m} $bold={m === "Safari"}>{m}</MenuItem>
            ))}
          </MenuGroup>
          <StatusGroup>
            <DockerIcon />
            <OutlookIcon />
            <VolumeIcon />
            <BatteryIcon />
            <WifiIcon />
            <SearchIcon />
            <ControlIcon />
            <SiriOrb>
              <svg width="24" height="24" viewBox="0 0 24 24" fill="none" stroke="#fff" strokeWidth="2">
                <circle cx="12" cy="12" r="9" strokeOpacity="0.8" />
                <path d="M3 12c5-8 12 8 18 0M5 15c6 2 8-8 14-6" />
              </svg>
            </SiriOrb>
            <Clock>Sun May 11  4:34 AM</Clock>
          </StatusGroup>
        </MenuBar>

        <BrowserWindow>
          <Toolbar>
            <ToolSide>
              <Lights>
                <Light $color="#ec6a5e" aria-label="Close" />
                <Light $color="#f4bf4f" aria-label="Minimize" />
                <Light $color="#61c554" aria-label="Zoom" />
              </Lights>
              <ToolButton $after={13} $tone="#b1afb2" aria-label="Show sidebar"><SidebarIcon /></ToolButton>
              <ToolRule />
              <ToolButton $after={51} $tone="#e4e3e5" aria-label="Tab groups">
                <svg width="16" height="10" viewBox="0 0 16 10" {...line} strokeWidth="3"><path d="m2 2 6 6 6-6" /></svg>
              </ToolButton>
              <ToolButton $after={54} $tone="#68666a" aria-label="Back">
                <svg width="18" height="30" viewBox="0 0 18 30" {...line} strokeWidth="3"><path d="M16 2 2 15l14 13" /></svg>
              </ToolButton>
              <ToolButton $tone="#68666a" aria-label="Forward">
                <svg width="18" height="30" viewBox="0 0 18 30" {...line} strokeWidth="3"><path d="m2 2 14 13L2 28" /></svg>
              </ToolButton>
            </ToolSide>
            <Address>
              <svg width="24" height="30" viewBox="0 0 24 30" {...line} stroke="#e4e3e5" strokeWidth="2.500">
                <rect x="1.500" y="2" width="21" height="13" rx="3" />
                <path d="M1.500 21h21M1.500 28h14" />
              </svg>
              <AddressInput aria-label="Address" defaultValue="127.0.0.1" />
              <svg width="26" height="30" viewBox="0 0 26 30" {...line} stroke="#e4e3e5" strokeWidth="2.500">
                <path d="M20 10.500A10.500 10.500 0 1 0 23.500 18M13 1.500 20.500 8 14 14.500" />
              </svg>
            </Address>
            <ToolSide $end>
              <ToolButton aria-label="Share">
                <svg width="32" height="38" viewBox="0 0 32 38" {...line} strokeWidth="2.500">
                  <path d="M11 13H5q-3 0-3 3v17q0 3 3 3h22q3 0 3-3V16q0-3-3-3h-6M16 24V2M10 8l6-6 6 6" />
                </svg>
              </ToolButton>
              <ToolButton aria-label="New tab">
                <svg width="28" height="28" viewBox="0 0 28 28" {...line} strokeWidth="2.500"><path d="M14 1v26M1 14h26" /></svg>
              </ToolButton>
              <ToolButton aria-label="Tab overview">
                <svg width="36" height="36" viewBox="0 0 36 36" {...line} strokeWidth="2.500">
                  <rect x="9" y="9" width="25" height="25" rx="4" />
                  <path d="M9 27H6q-4 0-4-4V6q0-4 4-4h17q4 0 4 4v3" />
                </svg>
              </ToolButton>
            </ToolSide>
          </Toolbar>

          <TabBar>
            <Tab>
              <Favicon $kind="dark"><SiOpenai size={26} /></Favicon>
              Multi-Agent War Simulation
            </Tab>
            <Tab $active>
              <Favicon $kind="pin">1</Favicon>
              Multi-Agent War Simulation
            </Tab>
            <Tab>
              <Favicon $kind="round"><FcGoogle size={28} /></Favicon>
              matplot lib buttons edit UI - Google Search
            </Tab>
            <Tab>
              <Favicon $kind="dark"><CursorMark /></Favicon>
              Settings | Cursor - The AI Code Editor
            </Tab>
          </TabBar>

          <Viewport>
            <Page>
              <Column>
                <Sidebar>
                  <Field>
                    <FieldLabel htmlFor="health">Health Configuration</FieldLabel>
                    <Select id="health" value="Full Health" options={["Full Health"]} />
                  </Field>
                  <Field>
                    <FieldLabel htmlFor="animosity">Animosity Profile</FieldLabel>
                    <Select id="animosity" value="High Initial Animosity" options={["High Initial Animosity"]} />
                  </Field>
                  <RateField id="alpha" label="Learning Rate (α)" start={0.8} />
                  <RateField id="beta" label="Discount Factor (β)" start={0.95} />
                  <Field>
                    <FieldLabel as="div">Agent Types</FieldLabel>
                    <AgentList>
                      {agents.map((a, i) => (
                        <AgentRow key={a.name}>
                          <AgentName htmlFor={`agent-${i}`}>{a.name}:</AgentName>
                          <Select id={`agent-${i}`} value={a.type} options={["RL", "Random"]} />
                        </AgentRow>
                      ))}
                    </AgentList>
                  </Field>
                  <Actions>
                    <ActionButton $color="#2f6df6">Run Simulation</ActionButton>
                    <ActionButton $color="#418558">Train &amp; Run</ActionButton>
                  </Actions>
                </Sidebar>
              </Column>

              <Column>
                <Stage>
                  <HealthPlot />
                  <FrameRange type="range" aria-label="Frame" min="0" max="1000" defaultValue="723" />
                  <PlayerButtons>
                    {players.map((p) => (
                      <PlayerButton key={p.label} aria-label={p.label}>
                        <svg width="30" height="31" viewBox="0 0 30 31" overflow="visible"><path d={p.d} fill="currentColor" /></svg>
                      </PlayerButton>
                    ))}
                  </PlayerButtons>
                  <LoopModes>
                    {["Once", "Loop", "Reflect"].map((m) => (
                      <LoopMode key={m}>
                        <Radio type="radio" name="mode" checked={mode === m} onChange={() => setMode(m)} />
                        {m}
                      </LoopMode>
                    ))}
                  </LoopModes>
                  <Toggles>
                    <Toggle aria-label="Frames">
                      <svg width="38" height="40" viewBox="0 0 38 40" fill="#fff">
                        {[0, 1, 2, 3, 4, 5].map((n) => (
                          <path key={n} d={`M${8 - n * 1.5} ${n * 7}h30l-1 5h-30z`} />
                        ))}
                      </svg>
                    </Toggle>
                    <Toggle $small aria-label="Blank" />
                  </Toggles>
                </Stage>
              </Column>
            </Page>
          </Viewport>
        </BrowserWindow>

        <BackWindow $depth={1} $fill="linear-gradient(90deg, #1d4079 0 68px, #4b4b4b 68px 94%, #9a9a9a)" />
        <BackWindow $depth={2} $fill="#0c0c0d" />

        <Dock>
          <DockApps apps={mainApps} />
          <DockRule />
          <DockApps apps={recentApps} />
          <DockRule />
          <DockApps apps={places} />
        </Dock>
      </Desktop>
    </>
  );
}
